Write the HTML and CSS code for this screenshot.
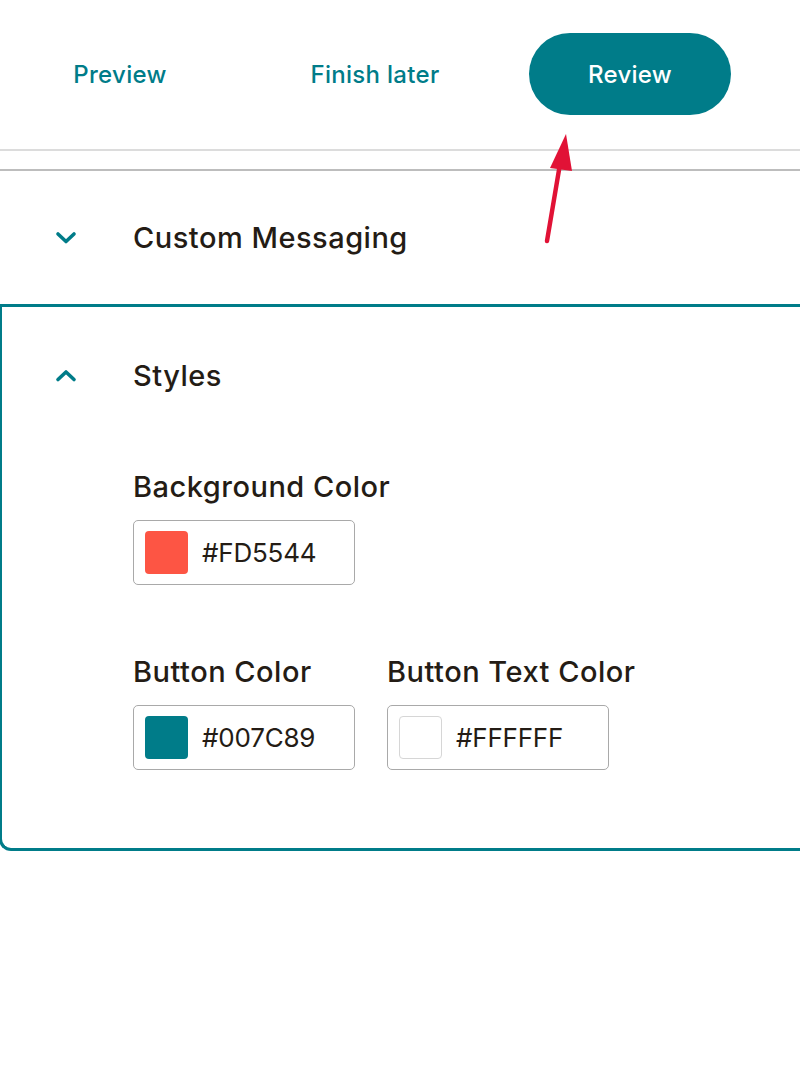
FILE: index.html
```html
<!DOCTYPE html>
<html lang="en">

<head>
  <title>Signup Form Styles</title>
  <link rel="stylesheet" href="styles.css">
</head>

<body>
  <header class="toolbar">
    <button class="tool-btn">Preview</button>
    <button class="tool-btn">Finish later</button>
    <button class="tool-btn primary">Review</button>
  </header>
  <div class="toolbar-gap"></div>

  <section class="accordion">
    <div class="accordion-head">
      <span class="chevron">
        <svg width="22" height="14" viewBox="0 0 22 14"><path d="M3 3 L11 10.5 L19 3" fill="none" stroke="#007c89" stroke-width="3.6" stroke-linecap="round" stroke-linejoin="round"/></svg>
      </span>
      <h2 class="accordion-title">Custom Messaging</h2>
    </div>
  </section>

  <section class="accordion open">
    <div class="accordion-head">
      <span class="chevron">
        <svg width="22" height="14" viewBox="0 0 22 14"><path d="M3 10.5 L11 3 L19 10.5" fill="none" stroke="#007c89" stroke-width="3.6" stroke-linecap="round" stroke-linejoin="round"/></svg>
      </span>
      <h2 class="accordion-title">Styles</h2>
    </div>

    <div class="accordion-body">
      <div class="field-row">
        <div class="field">
          <label class="field-label">Background Color</label>
          <div class="color-input">
            <span class="swatch swatch-red"></span>
            <span class="color-value">#FD5544</span>
          </div>
        </div>
      </div>

      <div class="field-row">
        <div class="field">
          <label class="field-label">Button Color</label>
          <div class="color-input">
            <span class="swatch swatch-teal"></span>
            <span class="color-value">#007C89</span>
          </div>
        </div>
        <div class="field">
          <label class="field-label">Button Text Color</label>
          <div class="color-input">
            <span class="swatch swatch-white"></span>
            <span class="color-value">#FFFFFF</span>
          </div>
        </div>
      </div>
    </div>
  </section>

  <!-- annotation arrow pointing at Review -->
  <svg class="arrow" width="800" height="260" viewBox="0 0 800 260">
    <line x1="547" y1="241" x2="560" y2="164" stroke="#e11236" stroke-width="4.5" stroke-linecap="round"/>
    <polygon points="566,134 550,168 572,171" fill="#e11236"/>
  </svg>
</body>

</html>
```

FILE: styles.css
```css
body {
  margin: 0;
  background: #ffffff;
  font-family: 'Inter', 'Noto Sans', sans-serif;
  color: #241c15;
  overflow: hidden;
}

.toolbar {
  display: flex;
  align-items: center;
  gap: 53px;
  padding: 33px 0 34px 19px;
  border-bottom: 2px solid #dcdcdc;
}

.tool-btn {
  width: 202px;
  height: 82px;
  border: none;
  border-radius: 41px;
  background: none;
  color: #007c89;
  font-family: inherit;
  font-size: 24px;
  font-weight: 500;
  letter-spacing: 0.3px;
  cursor: pointer;
}

.tool-btn.primary {
  background-color: #007c89;
  color: #ffffff;
}

.toolbar-gap {
  height: 18px;
  border-bottom: 2px solid #bdbdbd;
}

.accordion-head {
  display: flex;
  align-items: center;
  height: 133px;
  padding-left: 55px;
}

.chevron {
  display: flex;
  width: 78px;
}

.accordion-title {
  margin: 0;
  font-size: 29px;
  font-weight: 500;
  letter-spacing: 0.5px;
}

/* open panel gets the teal frame */
.accordion.open {
  margin-left: -1px;
  margin-right: -20px;
  border: 3px solid #007c89;
  border-right: none;
  border-bottom-left-radius: 12px;
}

.accordion.open .accordion-head {
  height: 137px;
  padding-left: 53px;
}

.accordion-body {
  padding: 26px 0 78px 131px;
}

.field-row {
  display: flex;
  gap: 32px;
}

.field-row + .field-row {
  margin-top: 70px;
}

.field-label {
  display: block;
  font-size: 29px;
  font-weight: 500;
  line-height: 34px;
  letter-spacing: 0.5px;
  margin-bottom: 16px;
  white-space: nowrap;
}

.color-input {
  display: flex;
  align-items: center;
  box-sizing: border-box;
  width: 222px;
  height: 65px;
  border: 1px solid #a9a9a9;
  border-radius: 5px;
  padding-left: 11px;
}

.swatch {
  width: 43px;
  height: 43px;
  border-radius: 4px;
  margin-right: 14px;
  box-sizing: border-box;
}

.swatch-red {
  background-color: #fd5544;
}

.swatch-teal {
  background-color: #007c89;
}

.swatch-white {
  background-color: #ffffff;
  border: 1px solid #d6d6d6;
}

.color-value {
  font-size: 26px;
  font-weight: 400;
  letter-spacing: -0.2px;
}

.arrow {
  position: absolute;
  top: 0;
  left: 0;
  pointer-events: none;
}
```
